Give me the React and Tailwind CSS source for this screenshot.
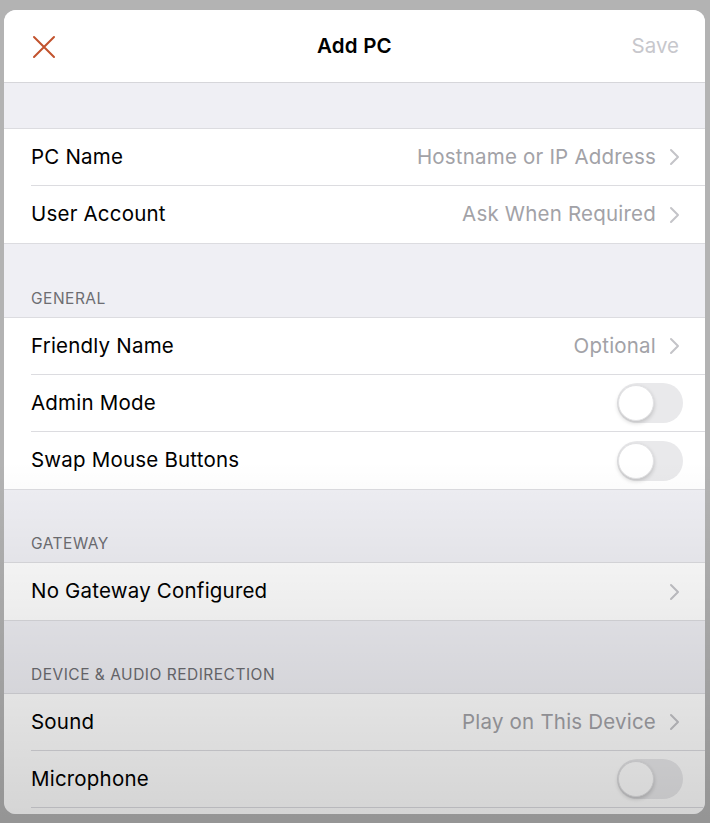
const font = { fontFamily: "Inter, 'Noto Sans', sans-serif" };

function Chevron() {
  return (
    <svg width="11" height="18" viewBox="0 0 11 18" className="shrink-0">
      <polyline
        points="2,2 9,9 2,16"
        fill="none"
        stroke="#c4c4c8"
        strokeWidth="2"
        strokeLinecap="round"
        strokeLinejoin="round"
      />
    </svg>
  );
}

function Toggle() {
  return (
    <div className="relative w-[66px] h-[40px] rounded-full bg-[#e9e9eb]">
      <div className="absolute left-[1px] top-[2px] w-[36px] h-[36px] rounded-full bg-white border border-[#e2e2e4] shadow-[0_2px_4px_rgba(0,0,0,0.18)]" />
    </div>
  );
}

function Row({ label, value, chevron, toggle, last }) {
  return (
    <div className="bg-white pl-[27px] h-[57px]">
      <div
        className={`flex items-center h-full ${
          last ? "" : "border-b border-[#dcdce0]"
        } ${toggle ? "pr-[22px]" : "pr-[25px]"}`}
      >
        <span className="text-[20.5px] text-black tracking-[0.2px]">{label}</span>
        <div className="ml-auto flex items-center gap-[13px]">
          {value && (
            <span className="text-[20.5px] text-[#a2a2a7] tracking-[0.2px]">{value}</span>
          )}
          {chevron && <Chevron />}
          {toggle && <Toggle />}
        </div>
      </div>
    </div>
  );
}

function Group({ children }) {
  return <div className="border-y border-[#dcdce0]">{children}</div>;
}

function SectionHeader({ title, h }) {
  return (
    <div className={`flex items-end pl-[27px] pb-[7px] ${h}`}>
      <span className="text-[15.5px] text-[#6d6d72] uppercase tracking-[0.5px]">{title}</span>
    </div>
  );
}

export default function App() {
  return (
    <div
      className="relative w-[710px] h-[823px] bg-[#b3b3b3] pt-[10px] px-[4px] overflow-hidden"
      style={font}
    >
      <div className="w-[701px] h-[804px] rounded-[12px] bg-[#efeff4] overflow-hidden">
        {/* Header */}
        <div className="h-[73px] bg-white border-b border-[#d6d6da] grid grid-cols-3 items-center px-[26px]">
          <div className="flex items-center">
            <svg width="24" height="24" viewBox="0 0 24 24" className="ml-[2px] mt-[1px]">
              <path
                d="M2 2 L22 22 M22 2 L2 22"
                stroke="#c2522d"
                strokeWidth="2"
                strokeLinecap="round"
                fill="none"
              />
            </svg>
          </div>
          <div className="text-center text-[20.5px] font-semibold text-black tracking-[0.2px]">
            Add PC
          </div>
          <div className="text-right text-[20.5px] text-[#c7c7cc]">Save</div>
        </div>

        <div className="h-[45px]" />
        <Group>
          <Row label="PC Name" value="Hostname or IP Address" chevron />
          <Row label="User Account" value="Ask When Required" chevron last />
        </Group>

        <SectionHeader title="General" h="h-[73px]" />
        <Group>
          <Row label="Friendly Name" value="Optional" chevron />
          <Row label="Admin Mode" toggle />
          <Row label="Swap Mouse Buttons" toggle last />
        </Group>

        <SectionHeader title="Gateway" h="h-[72px]" />
        <Group>
          <Row label="No Gateway Configured" chevron last />
        </Group>

        <SectionHeader title="Device & Audio Redirection" h="h-[72px]" />
        <Group>
          <Row label="Sound" value="Play on This Device" chevron />
          <Row label="Microphone" toggle />
          <div className="bg-white h-[57px]" />
        </Group>
      </div>

      {/* video fade toward the bottom */}
      <div className="pointer-events-none absolute inset-0 bg-linear-to-b from-transparent from-[56%] to-black/[0.17]" />
    </div>
  );
}
